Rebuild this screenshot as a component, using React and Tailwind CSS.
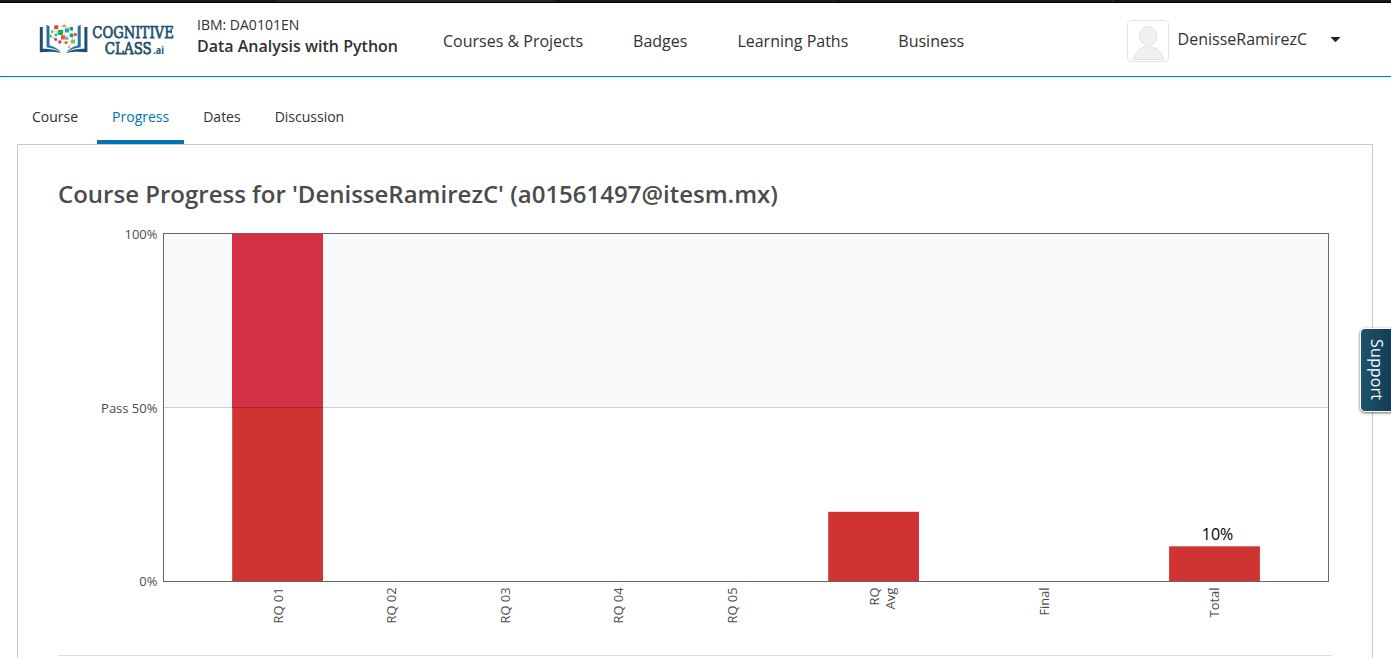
import React from "react";

const dots = [
  [56.2, 27.2, 4, "#e8413c"], [64.2, 26, 3.2, "#e8a13c"], [71.4, 28.8, 3.4, "#1d9b6c"],
  [52, 31.6, 2.6, "#9ac43c"], [60.5, 32.4, 5.2, "#21b04b"], [67, 30.4, 4.2, "#22a7b8"],
  [75.4, 34.6, 3, "#e6542c"], [50.6, 36.2, 2.4, "#3fb54b"], [56, 34.8, 2.8, "#2fb4b7"],
  [63.2, 37.4, 4.4, "#f0542c"], [71.6, 35.4, 3.6, "#18a558"], [55.6, 39.4, 2.8, "#e62a6a"],
  [67, 38.4, 3, "#51b8d8"], [59.8, 42, 2.8, "#dd2a5c"], [73, 41.4, 4, "#83c341"],
  [66, 42.6, 2.8, "#e8543c"], [69, 47.2, 2.2, "#e8a93c"],
];

function Book({ transform }) {
  return (
    <g transform={transform}>
      <path d="M39.800 27h3v21.800c6 .300 13.500.200 18.200 4.400-6-1.800-13.500-1.500-21.200-.9z" fill="#1a4f78" />
      <path d="M46.500 24.800l3 1.400v19.200c5 1.200 9.300 3.400 11.700 7.400-4-3.600-9-4.900-14.700-5.600z" fill="#2a70a6" />
    </g>
  );
}

function Logo() {
  return (
    <svg className="block h-[60px] w-[160px] shrink-0 overflow-visible" viewBox="30 10 160 60">
      <Book />
      <Book transform="matrix(-1 0 0 1 127.200 0)" />
      <path
        d="M52 31l5-4 8-1 7 3 4 6-3 6-7 1-6 0-4-3-5-3 1-5 8 1 7-2 5 5-9 2-6-5-4 7M67 30l-4 7-3 5M72 29v6l1 6-4 6"
        fill="none" stroke="#91bfb5" strokeWidth=".5"
      />
      {dots.map(([x, y, s, c], i) => (
        <rect key={i} x={x - s / 2} y={y - s / 2} width={s} height={s} rx=".9" fill={c} />
      ))}
      <g fill="#1d4f70" stroke="#1d4f70" strokeWidth=".75" fontFamily="'DejaVu Serif', serif" fontSize="16.800">
        <text x="92.300" y="38.300" textLength="81.500" lengthAdjust="spacingAndGlyphs">COGNITIVE</text>
        <text x="104.800" y="53.500" textLength="47" lengthAdjust="spacingAndGlyphs">CLASS</text>
      </g>
      <text x="153.200" y="53.500" fill="#1d4f70" fontFamily="'Open Sans', sans-serif" fontWeight="700" fontSize="10" textLength="10.800" lengthAdjust="spacingAndGlyphs">.ai</text>
    </svg>
  );
}

function Avatar() {
  return (
    <svg className="block size-[42px] shrink-0" viewBox="0 0 42 42">
      <rect x=".5" y=".5" width="41" height="41" rx="3.500" fill="#fff" stroke="#e4e4e4" />
      <g fill="#f0f0f0" stroke="#e3e3e3">
        <path d="M6.200 39.500C8 31 13.500 26.800 21.300 26.800S34.600 31 36.400 39.500z" />
        <ellipse cx="21.300" cy="16.200" rx="8.800" ry="9.600" />
      </g>
    </svg>
  );
}

const ticks = [
  ["RQ 01", 283, 36], ["RQ 02", 396, 36], ["RQ 03", 510, 36], ["RQ 04", 623, 36], ["RQ 05", 737, 36],
  ["RQ", 879, 18], ["Avg", 895, 22], ["Final", 1048.500, 28], ["Total", 1219, 30],
];

function GradeChart() {
  return (
    <svg
      className="block h-[430px] w-[1274px]"
      viewBox="58 225 1274 430"
      fontFamily="'Open Sans', sans-serif"
      fontSize="13"
    >
      <g fill="#d03432">
        <rect x="232.200" y="234" width="90.800" height="347" />
        <rect x="828.200" y="511.800" width="90.800" height="69.200" />
        <rect x="1169.100" y="546.300" width="90.800" height="34.700" />
      </g>
      <rect x="164" y="234" width="1164" height="173" fill="#f8f9fb" />
      <rect x="232" y="234" width="91" height="173" fill="#d13143" />
      <path d="M164 407.500h1164" stroke="#cdcfd1" />
      <path d="M232 407.500H323" stroke="#b71d2d" />
      <rect x="163.500" y="233.500" width="1165" height="348" fill="none" stroke="#666" />
      <path d="M232 233.500H323" stroke="#d13144" strokeOpacity=".5" />
      <g fill="#4c4c4c" textAnchor="end">
        <text x="157.500" y="239">100%</text>
        <text x="157.500" y="413">Pass 50%</text>
        <text x="157.500" y="586">0%</text>
        {ticks.map(([t, x, w]) => (
          <text key={t} transform={`translate(${x} 587.500) rotate(-90)`} textLength={w} lengthAdjust="spacingAndGlyphs">{t}</text>
        ))}
      </g>
      <text x="1217.500" y="540" fontSize="16" fill="#000" textAnchor="middle">10%</text>
    </svg>
  );
}

export default function App() {
  return (
    <div className="relative flex h-[658px] w-[1391px] flex-col overflow-hidden bg-white font-['Open_Sans',sans-serif] text-[#313131]">
      <div className="flex h-[3px] shrink-0 border-b border-black bg-[#1a1718]">
        <div className="w-[275px]" />
        <div className="w-[280px] bg-[#262324]" />
        <div className="w-[279px] border-r border-[#353233]" />
        <div className="w-[279px] border-r border-[#353233]" />
      </div>
      <header className="flex h-[74px] shrink-0 border-b border-[#0079bc] pl-[30px] shadow-[0_2px_4px_rgba(0,0,0,0.05)]">
        <div className="pt-[7px]"><Logo /></div>
        <div className="ml-[7px] w-[246px] pt-3">
          <div className="text-sm leading-5">IBM: DA0101EN</div>
          <div className="text-base leading-[22px] font-semibold">Data Analysis with Python</div>
        </div>
        <nav className="flex gap-[50px] pt-[26px] text-base leading-6 whitespace-nowrap">
          <a>Courses &amp; Projects</a>
          <a>Badges</a>
          <a>Learning Paths</a>
          <a>Business</a>
        </nav>
        <div className="mr-[50px] ml-auto flex pt-[17px]">
          <Avatar />
          <div className="ml-[9px] pt-[7px] text-base leading-6">DenisseRamirezC</div>
          <svg className="mt-[17px] ml-[23px] h-[6px] w-[11px]" viewBox="0 0 11 6">
            <path d="M.500 0h10L6 4.800q-.500.500-1 0z" fill="#222" />
          </svg>
        </div>
      </header>
      <nav className="flex h-[67px] shrink-0 items-end gap-1 pl-[17px] text-sm leading-5">
        <a className="border-b-4 border-transparent px-[15px] pb-[13px]">Course</a>
        <a className="border-b-4 border-[#0075b4] px-[15px] pb-[13px] text-[#0075b4]">Progress</a>
        <a className="border-b-4 border-transparent px-[15px] pb-[13px]">Dates</a>
        <a className="border-b-4 border-transparent px-[15px] pb-[13px]">Discussion</a>
      </nav>
      <main className="mr-[18px] ml-[17px] flex-1 border border-b-0 border-[#c8c8c8] px-10 pt-[31px]">
        <h1 className="h-[49px] text-2xl leading-9 font-semibold whitespace-nowrap text-[#4b4b4b]">
          Course Progress for 'DenisseRamirezC' (a01561497@itesm.mx)
        </h1>
        <GradeChart />
        <hr className="border-[#ddd]" />
      </main>
      <button className="absolute top-[328px] right-[-2px] flex h-[84px] w-[33px] items-center justify-center rounded-l-[5px] border border-white bg-linear-to-r from-[#1e536c] to-[#123d56] pl-px text-base leading-5 tracking-[0.15px] text-white shadow-[0_1px_3px_rgba(0,0,0,0.6)] [writing-mode:vertical-rl]">
        Support
      </button>
    </div>
  );
}
